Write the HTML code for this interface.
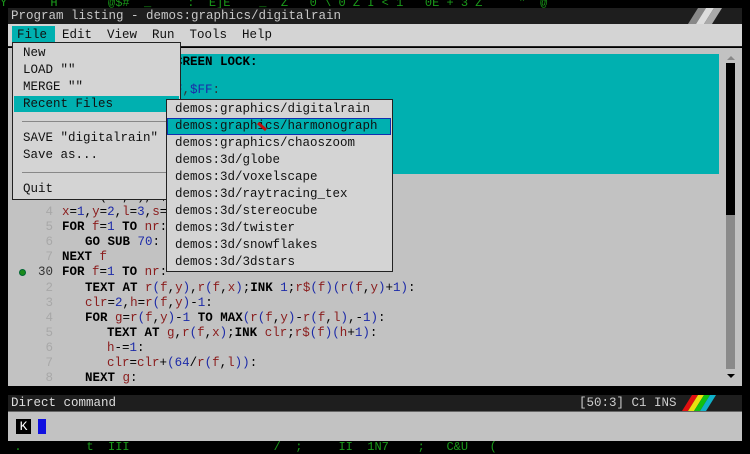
<!DOCTYPE html>
<html><head><style>
body{margin:0;width:750px;height:450px;background:#000;position:relative;overflow:hidden;font-family:"Liberation Mono",monospace;font-size:12.5px}
div{position:absolute}
.t{white-space:pre;line-height:15px}
.k{color:#000;font-weight:bold}
.v{color:#8a1c1c}
.n{color:#1c2aa8}
.p{color:#333}
.ln{color:#a8a8a8;width:40px;text-align:right;left:13px}
.g{color:#1a9a1a;white-space:pre;font-size:12px}
</style></head><body>
<div class="g" style="left:0;top:-4px">Y      H       @$#  _     :  E]E    _  Z   0 \ 0 Z I &lt; 1   0E + 3 Z     "  @</div>
<div class="g" style="left:0;top:440px">  .         t  III                    /  ;     II  1N7    ;   C&amp;U   (</div>
<!-- title bar -->
<div style="left:8px;top:8px;width:734px;height:16px;background:#1e1e1e"></div>
<div class="t" style="left:11px;top:8px;color:#c8c8c8;line-height:16px">Program listing - demos:graphics/digitalrain</div>
<svg style="position:absolute;left:682px;top:8px" width="45" height="16"><polygon points="6,16 16,0 24,0 14,16" fill="#888"/><polygon points="14,16 24,0 32,0 22,16" fill="#ddd"/><polygon points="22,16 32,0 40,0 30,16" fill="#aaa"/></svg>
<!-- menu bar -->
<div style="left:8px;top:24px;width:734px;height:22px;background:#d4d4d4;border-bottom:1px solid #222"></div>
<div style="left:12px;top:26px;width:43px;height:19px;background:#00b0b0"></div>
<div class="t" style="left:17px;top:26px;line-height:18px;color:#111">File  Edit  View  Run  Tools  Help</div>
<!-- editor -->
<div style="left:8px;top:48px;width:734px;height:338px;background:#c2c2c2"></div>
<div style="left:55px;top:54px;width:664px;height:120px;background:#00b0b0"></div>
<div style="left:726px;top:63px;width:9px;height:152px;background:#000"></div>
<div style="left:726px;top:215px;width:9px;height:154px;background:#8a8a8a"></div>
<div style="left:727px;top:56px;width:0;height:0;border:4px solid transparent;border-bottom-color:#888;border-top:0"></div>
<div style="left:727px;top:374px;width:0;height:0;border:4px solid transparent;border-top-color:#000;border-bottom:0"></div>
<div class="t k" style="left:175px;top:55px">CREEN LOCK:</div>
<div class="t" style="left:175px;top:83px"><span class="n">F</span><span class="p">,</span><span class="n">$FF</span><span class="p">:</span></div>
<div class="t" style="left:62px;top:190px"><span class="k">DIM</span> <span class="v">r</span>(<span class="v">nr</span>,6),r$</div>
<div class="t ln" style="top:205px">4</div>
<div class="t" style="left:62px;top:205px"><span class="v">x</span>=<span class="n">1</span>,<span class="v">y</span>=<span class="n">2</span>,<span class="v">l</span>=<span class="n">3</span>,<span class="v">s</span>=</div>
<div class="t ln" style="top:220px">5</div>
<div class="t" style="left:62px;top:220px"><span class="k">FOR</span> <span class="v">f</span>=<span class="n">1</span> <span class="k">TO</span> <span class="v">nr</span>:</div>
<div class="t ln" style="top:235px">6</div>
<div class="t" style="left:85px;top:235px"><span class="k">GO SUB</span> <span class="n">70</span>:</div>
<div class="t ln" style="top:250px">7</div>
<div class="t" style="left:62px;top:250px"><span class="k">NEXT</span> <span class="v">f</span></div>
<div style="left:19px;top:269px;width:5px;height:5px;border-radius:50%;background:#1a8a1a;border:1px solid #063"></div>
<div class="t ln" style="top:265px;color:#333">30</div>
<div class="t" style="left:62px;top:265px"><span class="k">FOR</span> <span class="v">f</span>=<span class="n">1</span> <span class="k">TO</span> <span class="v">nr</span>:</div>
<div class="t ln" style="top:281px">2</div>
<div class="t" style="left:85px;top:281px"><span class="k">TEXT AT</span> <span class="v">r</span><span class="n">(</span><span class="v">f</span>,<span class="v">y</span><span class="n">)</span>,<span class="v">r</span><span class="n">(</span><span class="v">f</span>,<span class="v">x</span><span class="n">)</span>;<span class="k">INK</span> <span class="n">1</span>;<span class="v">r$</span><span class="n">(</span><span class="v">f</span><span class="n">)(</span><span class="v">r</span><span class="n">(</span><span class="v">f</span>,<span class="v">y</span><span class="n">)</span>+<span class="n">1</span><span class="n">)</span>:</div>
<div class="t ln" style="top:296px">3</div>
<div class="t" style="left:85px;top:296px"><span class="v">clr</span>=<span class="n">2</span>,<span class="v">h</span>=<span class="v">r</span><span class="n">(</span><span class="v">f</span>,<span class="v">y</span><span class="n">)</span>-<span class="n">1</span>:</div>
<div class="t ln" style="top:311px">4</div>
<div class="t" style="left:85px;top:311px"><span class="k">FOR</span> <span class="v">g</span>=<span class="v">r</span><span class="n">(</span><span class="v">f</span>,<span class="v">y</span><span class="n">)</span>-<span class="n">1</span> <span class="k">TO</span> <span class="k">MAX</span><span class="n">(</span><span class="v">r</span><span class="n">(</span><span class="v">f</span>,<span class="v">y</span><span class="n">)</span>-<span class="v">r</span><span class="n">(</span><span class="v">f</span>,<span class="v">l</span><span class="n">)</span>,-<span class="n">1</span><span class="n">)</span>:</div>
<div class="t ln" style="top:326px">5</div>
<div class="t" style="left:107px;top:326px"><span class="k">TEXT AT</span> <span class="v">g</span>,<span class="v">r</span><span class="n">(</span><span class="v">f</span>,<span class="v">x</span><span class="n">)</span>;<span class="k">INK</span> <span class="v">clr</span>;<span class="v">r$</span><span class="n">(</span><span class="v">f</span><span class="n">)(</span><span class="v">h</span>+<span class="n">1</span><span class="n">)</span>:</div>
<div class="t ln" style="top:341px">6</div>
<div class="t" style="left:107px;top:341px"><span class="v">h</span>-=<span class="n">1</span>:</div>
<div class="t ln" style="top:356px">7</div>
<div class="t" style="left:107px;top:356px"><span class="v">clr</span>=<span class="v">clr</span>+<span class="n">(64</span>/<span class="v">r</span><span class="n">(</span><span class="v">f</span>,<span class="v">l</span><span class="n">))</span>:</div>
<div class="t ln" style="top:371px;height:14px;overflow:hidden">8</div>
<div class="t" style="left:85px;top:371px;height:14px;overflow:hidden"><span class="k">NEXT</span> <span class="v">g</span>:</div>
<!-- file menu -->
<div style="left:12px;top:42px;width:167px;height:156px;background:#d4d4d4;border:1px solid #222"></div>
<div style="left:14px;top:96px;width:165px;height:16px;background:#00b0b0"></div>
<div style="left:22px;top:121px;width:150px;height:1px;background:#888"></div>
<div style="left:22px;top:172px;width:150px;height:1px;background:#888"></div>
<div class="t" style="left:23px;top:45px;color:#111;line-height:17px">New
LOAD ""
MERGE ""
Recent Files

SAVE "digitalrain"
Save as...

Quit</div>
<!-- recent submenu -->
<div style="left:166px;top:99px;width:225px;height:171px;background:#d4d4d4;border:1px solid #222"></div>
<div style="left:167px;top:118px;width:222px;height:15px;background:#00b0b0;border:1px solid #1030b0"></div>
<div class="t" style="left:175px;top:101px;color:#111;line-height:17px">demos:graphics/digitalrain
demos:graphics/harmonograph
demos:graphics/chaoszoom
demos:3d/globe
demos:3d/voxelscape
demos:3d/raytracing_tex
demos:3d/stereocube
demos:3d/twister
demos:3d/snowflakes
demos:3d/3dstars</div>
<svg style="position:absolute;left:256px;top:121px" width="14" height="12"><path d="M2 2 L10 9" stroke="#c01010" stroke-width="3"/></svg>
<!-- status bar -->
<div style="left:8px;top:395px;width:734px;height:16px;background:#1e1e1e;border-bottom:1px solid #666"></div>
<div class="t" style="left:11px;top:395px;color:#ddd;line-height:16px">Direct command</div>
<div class="t" style="left:579px;top:395px;color:#ccc;line-height:16px">[50:3] C1 INS</div>
<svg style="position:absolute;left:680px;top:395px" width="48" height="16"><polygon points="2,16 12,0 18,0 8,16" fill="#e01010"/><polygon points="8,16 18,0 24,0 14,16" fill="#e8e010"/><polygon points="14,16 24,0 30,0 20,16" fill="#10c010"/><polygon points="20,16 30,0 36,0 26,16" fill="#10b0c8"/></svg>
<div style="left:8px;top:412px;width:734px;height:29px;background:#c2c2c2"></div>
<div style="left:16px;top:419px;width:15px;height:15px;background:#000;color:#fff;font-size:13px;line-height:15px;text-align:center">K</div>
<div style="left:38px;top:419px;width:8px;height:15px;background:#1010e0"></div>
</body></html>
